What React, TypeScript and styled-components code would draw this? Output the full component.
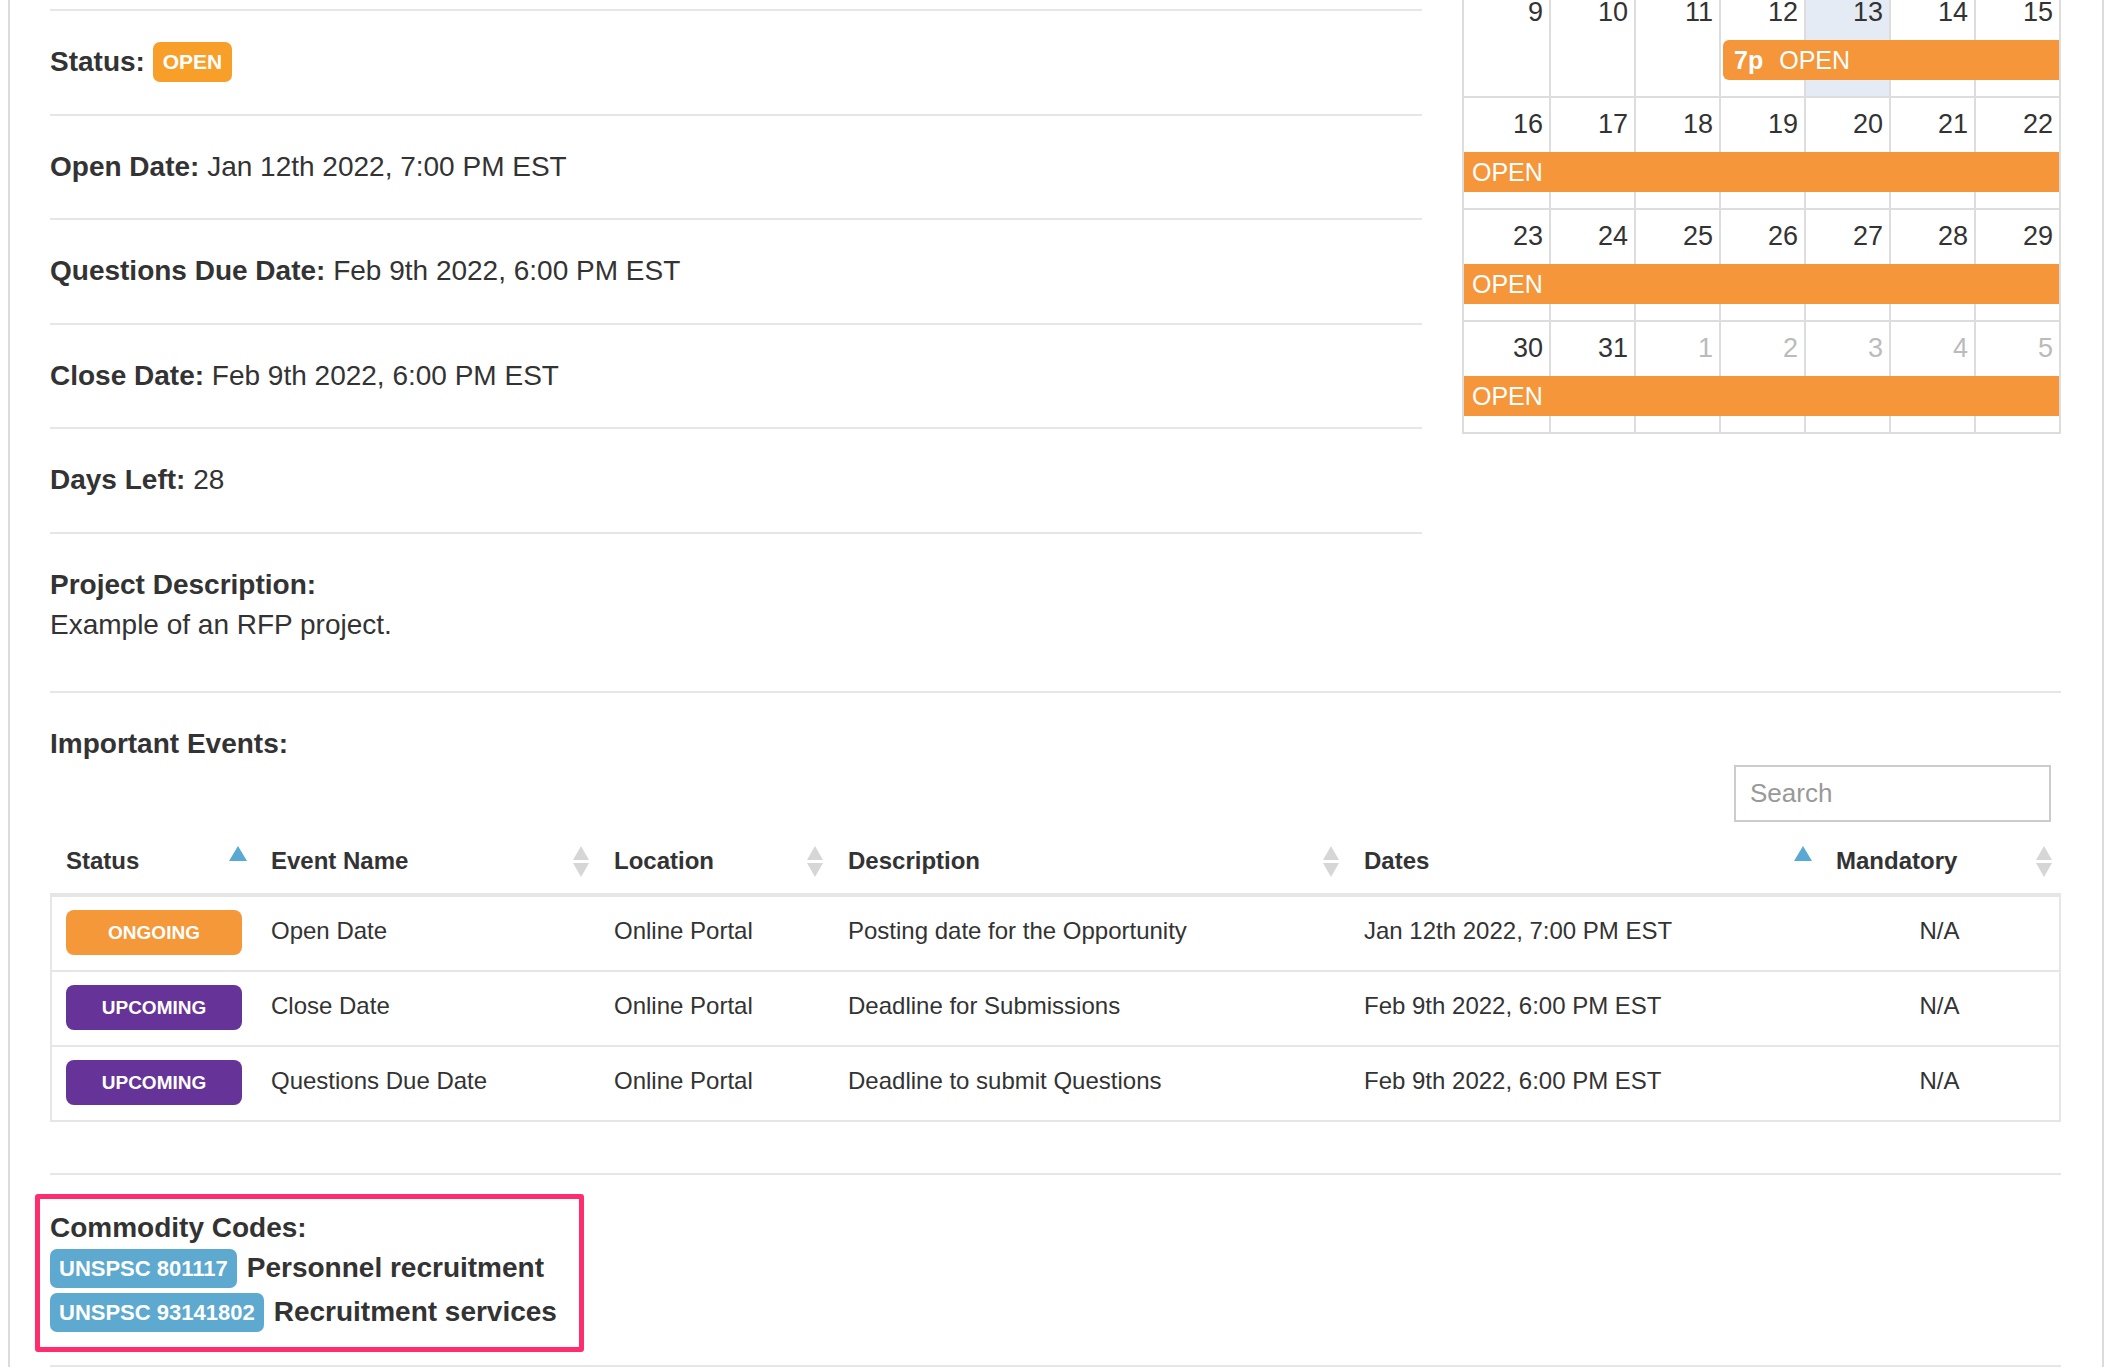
import styled, { createGlobalStyle } from 'styled-components';

const GlobalStyle = createGlobalStyle`
  html, body {
    margin: 0;
    padding: 0;
    background: #fff;
  }
  body {
    font-family: "Liberation Sans", Arial, Helvetica, sans-serif;
    font-size: 28px;
    line-height: 40px;
    color: #333;
    overflow: hidden;
  }
`;

const Page = styled.div`
  padding-left: 8px;
`;

const Panel = styled.div`
  width: 2096px;
  box-sizing: border-box;
  border-left: 2px solid #dcdcdc;
  border-right: 2px solid #dcdcdc;
  padding: 0 41px 0 40px;
`;

const TopRow = styled.div`
  display: flex;
  align-items: flex-start;
  gap: 40px;
`;

const DetailColumn = styled.div`
  width: 1372px;
  padding-top: 9px;
`;

const DetailRow = styled.div<{ $last?: boolean }>`
  border-top: 2px solid #e6e6e6;
  padding: 31px 0 ${({ $last }) => ($last ? '46px' : '31.5px')};
`;

const Label = styled.strong`
  font-weight: 700;
`;

const StatusBadge = styled.span`
  display: inline-block;
  vertical-align: top;
  height: 40px;
  line-height: 40px;
  padding: 0 10px;
  border-radius: 7px;
  background: #f89f2a;
  color: #fff;
  font-size: 21px;
  font-weight: 700;
`;

const CalendarColumn = styled.div`
  width: 599px;
  overflow: hidden;
`;

const CalendarFrame = styled.div`
  border-left: 2px solid #ddd;
  border-right: 2px solid #ddd;
`;

const Week = styled.div<{ $clipped?: boolean }>`
  display: grid;
  grid-template-columns: repeat(7, 1fr);
  grid-template-rows: 54px 40px 16px;
  border-bottom: 2px solid #ddd;
  margin-top: ${({ $clipped }) => ($clipped ? '-14px' : '0')};
`;

const DayCell = styled.div<{ $col: number; $today?: boolean; $muted?: boolean }>`
  grid-column: ${({ $col }) => $col};
  grid-row: 1 / 4;
  border-left: ${({ $col }) => ($col === 1 ? 'none' : '2px solid #ddd')};
  background: ${({ $today }) => ($today ? '#e4ebf5' : 'transparent')};
  padding: 6px 6px 0 0;
  text-align: right;
  font-size: 27px;
  line-height: 40px;
  color: ${({ $muted }) => ($muted ? '#bbb' : '#333')};
`;

const EventBar = styled.div<{ $start: number; $continues?: boolean }>`
  grid-column: ${({ $start }) => $start} / 8;
  grid-row: 2;
  margin-left: ${({ $continues }) => ($continues ? '0' : '4px')};
  padding-left: ${({ $continues }) => ($continues ? '8px' : '11px')};
  border-radius: ${({ $continues }) => ($continues ? '0' : '6px 0 0 6px')};
  background: #f5963a;
  color: #fff;
  font-size: 25px;
  line-height: 40px;
  white-space: nowrap;
`;

const EventTime = styled.span`
  font-weight: 700;
  margin-right: 16px;
`;

const EventsSection = styled.section`
  border-top: 2px solid #e6e6e6;
  padding: 31px 0 51px;
`;

const SectionTitle = styled.div`
  font-weight: 700;
  line-height: 40px;
`;

const SearchRow = styled.div`
  display: flex;
  justify-content: flex-end;
  padding-right: 10px;
  margin-top: 1px;
`;

const SearchInput = styled.input`
  width: 317px;
  height: 57px;
  box-sizing: border-box;
  border: 2px solid #ccc;
  border-radius: 0;
  padding: 0 14px;
  font-family: inherit;
  font-size: 26px;
  color: #555;
  outline: none;
  &::placeholder {
    color: #999;
  }
`;

const EventsTable = styled.table`
  width: 2011px;
  table-layout: fixed;
  border-collapse: separate;
  border-spacing: 0;
  font-size: 24px;
`;

const Col = styled.col<{ $w: number }>`
  width: ${({ $w }) => $w}px;
`;

const HeadCell = styled.th`
  text-align: left;
  font-weight: 700;
  line-height: 40px;
  padding: 19px 8px 12px 16px;
  border-bottom: 2px solid #e6e6e6;
  color: #333;
`;

const HeadInner = styled.div`
  display: flex;
  justify-content: space-between;
  align-items: center;
`;

const BodyCell = styled.td<{ $center?: boolean }>`
  padding: 12px 16px 16px;
  border-top: 2px solid #e6e6e6;
  vertical-align: middle;
  line-height: 34px;
  text-align: ${({ $center }) => ($center ? 'center' : 'left')};
  &:first-child {
    border-left: 2px solid #e6e6e6;
    padding: 13px 16px 15px 14px;
  }
  &:last-child {
    border-right: 2px solid #e6e6e6;
  }
  tr:last-child > & {
    border-bottom: 2px solid #e6e6e6;
  }
`;

const EventStatus = styled.div<{ $tone: 'ongoing' | 'upcoming' }>`
  width: 176px;
  height: 45px;
  line-height: 45px;
  border-radius: 8px;
  text-align: center;
  color: #fff;
  font-size: 19px;
  font-weight: 700;
  background: ${({ $tone }) => ($tone === 'ongoing' ? '#f5983a' : '#663399')};
`;

const CommoditySection = styled.section`
  border-top: 2px solid #e6e6e6;
  border-bottom: 2px solid #e6e6e6;
  padding: 19px 0 13px;
`;

const Highlight = styled.div`
  width: 549px;
  box-sizing: border-box;
  margin-left: -15px;
  border: 5px solid #ff2d6e;
  border-radius: 3px;
  padding: 9px 10px 15px;
`;

const CodeList = styled.div`
  display: flex;
  flex-direction: column;
  gap: 5px;
  margin-top: 1px;
`;

const CodeRow = styled.div`
  display: flex;
  align-items: center;
  gap: 10px;
  height: 39px;
  font-weight: 700;
`;

const CodeBadge = styled.span`
  height: 39px;
  line-height: 39px;
  padding: 0 9px;
  border-radius: 7px;
  background: #5ea9cf;
  color: #fff;
  font-size: 22px;
  font-weight: 700;
`;

type SortState = 'asc' | 'both';

const SortIcon = ({ state }: { state: SortState }) => (
  <svg width="18" height="32" viewBox="0 0 18 32" aria-hidden="true">
    {state === 'asc' ? (
      <polygon points="9,1 18,16 0,16" fill="#5aa8d4" />
    ) : (
      <>
        <polygon points="9,1 17,15 1,15" fill="#d6d6d6" />
        <polygon points="1,18 17,18 9,32" fill="#d6d6d6" />
      </>
    )}
  </svg>
);

interface Week {
  days: number[];
  mutedFrom?: number;
  today?: number;
  start: number;
  time?: string;
  clipped?: boolean;
}

const weeks: Week[] = [
  { days: [9, 10, 11, 12, 13, 14, 15], today: 5, start: 4, time: '7p', clipped: true },
  { days: [16, 17, 18, 19, 20, 21, 22], start: 1 },
  { days: [23, 24, 25, 26, 27, 28, 29], start: 1 },
  { days: [30, 31, 1, 2, 3, 4, 5], mutedFrom: 3, start: 1 },
];

const details = [
  { label: 'Open Date:', value: 'Jan 12th 2022, 7:00 PM EST' },
  { label: 'Questions Due Date:', value: 'Feb 9th 2022, 6:00 PM EST' },
  { label: 'Close Date:', value: 'Feb 9th 2022, 6:00 PM EST' },
  { label: 'Days Left:', value: '28' },
];

const columns: { title: string; width: number; sort: SortState }[] = [
  { title: 'Status', width: 205, sort: 'asc' },
  { title: 'Event Name', width: 343, sort: 'both' },
  { title: 'Location', width: 234, sort: 'both' },
  { title: 'Description', width: 516, sort: 'both' },
  { title: 'Dates', width: 472, sort: 'asc' },
  { title: 'Mandatory', width: 241, sort: 'both' },
];

const events = [
  {
    status: 'ongoing' as const,
    name: 'Open Date',
    description: 'Posting date for the Opportunity',
    dates: 'Jan 12th 2022, 7:00 PM EST',
  },
  {
    status: 'upcoming' as const,
    name: 'Close Date',
    description: 'Deadline for Submissions',
    dates: 'Feb 9th 2022, 6:00 PM EST',
  },
  {
    status: 'upcoming' as const,
    name: 'Questions Due Date',
    description: 'Deadline to submit Questions',
    dates: 'Feb 9th 2022, 6:00 PM EST',
  },
];

const codes = [
  { code: 'UNSPSC 801117', name: 'Personnel recruitment' },
  { code: 'UNSPSC 93141802', name: 'Recruitment services' },
];

export default function App() {
  return (
    <Page>
      <GlobalStyle />
      <Panel>
        <TopRow>
          <DetailColumn>
            <DetailRow>
              <Label>Status:</Label> <StatusBadge>OPEN</StatusBadge>
            </DetailRow>
            {details.map((d) => (
              <DetailRow key={d.label}>
                <Label>{d.label}</Label> {d.value}
              </DetailRow>
            ))}
            <DetailRow $last>
              <Label>Project Description:</Label>
              <div>Example of an RFP project.</div>
            </DetailRow>
          </DetailColumn>

          <CalendarColumn>
            <CalendarFrame>
              {weeks.map((w, wi) => (
                <Week key={wi} $clipped={w.clipped}>
                  {w.days.map((day, i) => (
                    <DayCell
                      key={i}
                      $col={i + 1}
                      $today={w.today === i + 1}
                      $muted={w.mutedFrom !== undefined && i + 1 >= w.mutedFrom}
                    >
                      {day}
                    </DayCell>
                  ))}
                  <EventBar $start={w.start} $continues={!w.time}>
                    {w.time && <EventTime>{w.time}</EventTime>}
                    OPEN
                  </EventBar>
                </Week>
              ))}
            </CalendarFrame>
          </CalendarColumn>
        </TopRow>

        <EventsSection>
          <SectionTitle>Important Events:</SectionTitle>
          <SearchRow>
            <SearchInput placeholder="Search" />
          </SearchRow>
          <EventsTable>
            <colgroup>
              {columns.map((c) => (
                <Col key={c.title} $w={c.width} />
              ))}
            </colgroup>
            <thead>
              <tr>
                {columns.map((c) => (
                  <HeadCell key={c.title}>
                    <HeadInner>
                      <span>{c.title}</span>
                      <SortIcon state={c.sort} />
                    </HeadInner>
                  </HeadCell>
                ))}
              </tr>
            </thead>
            <tbody>
              {events.map((e) => (
                <tr key={e.name}>
                  <BodyCell>
                    <EventStatus $tone={e.status}>
                      {e.status === 'ongoing' ? 'ONGOING' : 'UPCOMING'}
                    </EventStatus>
                  </BodyCell>
                  <BodyCell>{e.name}</BodyCell>
                  <BodyCell>Online Portal</BodyCell>
                  <BodyCell>{e.description}</BodyCell>
                  <BodyCell>{e.dates}</BodyCell>
                  <BodyCell $center>N/A</BodyCell>
                </tr>
              ))}
            </tbody>
          </EventsTable>
        </EventsSection>

        <CommoditySection>
          <Highlight>
            <SectionTitle>Commodity Codes:</SectionTitle>
            <CodeList>
              {codes.map((c) => (
                <CodeRow key={c.code}>
                  <CodeBadge>{c.code}</CodeBadge>
                  {c.name}
                </CodeRow>
              ))}
            </CodeList>
          </Highlight>
        </CommoditySection>
      </Panel>
    </Page>
  );
}
